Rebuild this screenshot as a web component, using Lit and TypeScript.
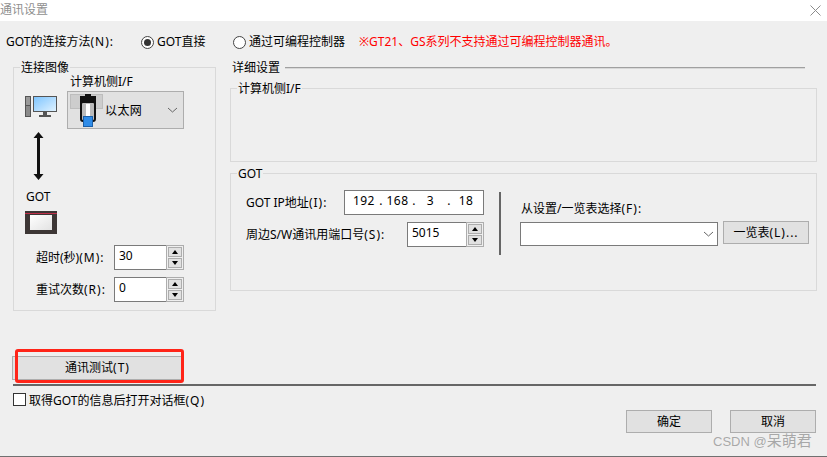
import { LitElement, html, css, svg } from "lit";
import { customElement } from "lit/decorators.js";

const chevron = svg`<svg class="chev" width="11" height="6" viewBox="0 0 11 6"><path d="M1 1l4.5 4L10 1" fill="none" stroke="#666" stroke-width="1"/></svg>`;

@customElement("app-root")
export class AppRoot extends LitElement {
  static styles = css`
    :host {
      display: flex;
      flex-direction: column;
      position: relative;
      width: 827px;
      height: 457px;
      overflow: hidden;
      background: #efefef;
      color: #000;
      font: 12px/16px "Noto Sans", "Noto Sans CJK SC", sans-serif;
    }
    * { box-sizing: border-box; }
    .k { letter-spacing: 1px; }
    .title {
      height: 21px;
      flex: none;
      background: #fff;
      color: #8f8f8f;
      display: flex;
      align-items: center;
      justify-content: space-between;
      padding: 0 6px 1px 0;
    }
    .top {
      height: 42px;
      flex: none;
      display: flex;
      align-items: center;
      padding-left: 6px;
    }
    .conn { width: 135px; }
    .radio {
      width: 13px;
      height: 13px;
      flex: none;
      border-radius: 50%;
      border: 1px solid #444;
      background: #fff;
      margin-right: 3px;
      display: flex;
      align-items: center;
      justify-content: center;
    }
    .radio.on::after {
      content: "";
      width: 7px;
      height: 7px;
      border-radius: 50%;
      background: #333;
    }
    .opt1 { width: 76px; }
    .opt2 { width: 110px; }
    .warn { color: #ff0000; white-space: nowrap; }
    .main {
      display: flex;
      gap: 14px;
      padding: 4px 10px 0 13px;
      flex: none;
    }
    .group {
      border: 1px solid #d9d9d9;
    }
    .legend {
      width: fit-content;
      height: 16px;
      margin: -8px 0 0 6px;
      padding: 0 1px;
      background: #efefef;
    }
    .left { width: 203px; height: 244px; }
    .link { display: flex; margin-top: -2px; padding-left: 11px; }
    .link-icons { width: 42px; padding-top: 22px; display: flex; flex-direction: column; }
    .link-icons svg { display: block; }
    .arrow { margin: 15px 0 0 8px; }
    .got-label { margin: 9px 0 0 1px; }
    .got-icon { margin-top: 6px; }
    .iface-label { padding-left: 3px; height: 17px; }
    .iface {
      width: 117px;
      height: 38px;
      background: #e1e1e1;
      border: 1px solid #adadad;
      display: flex;
      align-items: center;
      padding: 0 5px 0 2px;
    }
    .iface svg.plug { flex: none; align-self: flex-start; margin-top: 2px; }
    .iface span { margin-left: 1px; padding-top: 2px; flex: 1; font-size: 12px; letter-spacing: 0.4px; }
    .spin-row {
      display: flex;
      align-items: center;
      height: 25px;
      margin-top: 7px;
      padding-left: 22px;
    }
    .spin-row.first { margin-top: 11px; }
    .spin-row label { width: 78px; }
    .spin {
      display: flex;
      height: 25px;
      width: 70px;
      background: #fff;
    }
    .spin.wide { width: 77px; }
    .spin .val {
      flex: 1;
      border: 1px solid #7a7a7a;
      border-right: 0;
      padding: 0 0 3px 4px;
      display: flex;
      align-items: center;
      background: #fff;
    }
    .spin .btns {
      width: 18px;
      flex: none;
      border: 1px solid #adadad;
      background: #efefef;
      display: flex;
      flex-direction: column;
      gap: 1px;
      padding: 1px;
    }
    .spin .btns i {
      flex: 1;
      background: #e1e1e1;
      border: 1px solid #adadad;
      display: flex;
      align-items: center;
      justify-content: center;
    }
    .up { width: 0; height: 0; border: 3.5px solid transparent; border-top: 0; border-bottom: 4px solid #000; }
    .dn { width: 0; height: 0; border: 3.5px solid transparent; border-bottom: 0; border-top: 4px solid #000; }
    .right { width: 587px; display: flex; flex-direction: column; }
    .detail { display: flex; align-items: center; height: 16px; margin-top: -7px; padding-left: 2px; }
    .detail span { width: 53px; }
    .detail i { width: 520px; height: 1px; background: #a0a0a0; box-shadow: 0 1px 0 #d8d8d8; margin-top: -1px; }
    .pc { height: 74px; margin-top: 12px; }
    .got { height: 118px; margin-top: 11px; }
    .got-body { display: flex; margin-top: 8px; padding-left: 15px; }
    .got-fields { width: 238px; display: flex; flex-direction: column; gap: 7px; }
    .frow { display: flex; align-items: center; justify-content: space-between; height: 25px; }
    .ip {
      width: 140px;
      height: 25px;
      background: #fff;
      border: 1px solid #7a7a7a;
      display: grid;
      grid-template-columns: 22px 12px 21px 12px 21px 16px 18px;
      align-items: center;
      justify-items: center;
      padding: 0 0 3px 8px;
      letter-spacing: 0.4px;
    }
    .divider { width: 2px; height: 63px; margin: 2px 0 0 15px; background: #666; }
    .pick { margin: 11px 0 0 19px; }
    .pick-label { padding-left: 1px; }
    .pick-row { display: flex; align-items: flex-start; gap: 5px; margin-top: 5px; }
    .combo {
      width: 198px;
      height: 24px;
      background: #fff;
      border: 1px solid #7a7a7a;
      display: flex;
      align-items: center;
      justify-content: flex-end;
      padding-right: 3px;
    }
    button {
      font: inherit;
      color: #000;
      background: #e1e1e1;
      border: 1px solid #adadad;
      border-radius: 0;
      padding: 0;
      display: block;
    }
    .list { width: 86px; height: 23px; margin-top: -1px; }
    .test-wrap { position: relative; margin: 45px 0 0 12px; width: 172px; flex: none; }
    .test { width: 171px; height: 24px; }
    .mark {
      position: absolute;
      left: 3px;
      top: -7px;
      width: 169px;
      height: 34px;
      border: 3px solid #ff2418;
      border-radius: 3px;
      pointer-events: none;
    }
    .rule { height: 2px; margin: 4px 11px 0 13px; background: #666; flex: none; }
    .check { display: flex; align-items: center; gap: 3px; height: 13px; margin: 7px 0 0 13px; flex: none; }
    .check span + span { padding-top: 2px; }
    .box { width: 13px; height: 13px; background: #fff; border: 1px solid #333; }
    .actions { display: flex; justify-content: flex-end; gap: 18px; padding-right: 11px; margin-top: 4px; flex: none; }
    .actions button { width: 86px; height: 23px; }
    .foot { margin-top: auto; height: 1px; background: #707070; flex: none; }
    .wm {
      position: absolute;
      left: 713px;
      top: 432px;
      font-size: 15px;
      line-height: 18px;
      font-family: "Liberation Sans", "Noto Sans CJK SC", sans-serif;
      color: rgba(120, 120, 120, 0.6);
      white-space: nowrap;
    }
    .wm span { font-size: 13px; }
    .chev { display: block; flex: none; }
  `;

  spin(v: string, wide = false) {
    return html`<div class="spin ${wide ? "wide" : ""}">
      <div class="val">${v}</div>
      <div class="btns"><i><b class="up"></b></i><i><b class="dn"></b></i></div>
    </div>`;
  }

  render() {
    return html`
      <div class="title">
        <span>通讯设置</span>
        <svg width="11" height="11" viewBox="0 0 11 11"><path d="M.5.5l10 10M10.5.5l-10 10" stroke="#8c8c8c" fill="none"/></svg>
      </div>
      <div class="top">
        <span class="conn">GOT的连接方法<span class="k">(N):</span></span>
        <span class="radio on"></span><span class="opt1">GOT直接</span>
        <span class="radio"></span><span class="opt2">通过可编程控制器</span>
        <span class="warn">※GT21、GS系列不支持通过可编程控制器通讯。</span>
      </div>
      <div class="main">
        <div class="group left">
          <div class="legend">连接图像</div>
          <div class="link">
            <div class="link-icons">
              <svg width="32" height="21" viewBox="0 0 32 21">
                <rect x="0" y="0" width="6" height="21" fill="#555"/>
                <rect x="1" y="1" width="4" height="8" fill="#999"/>
                <rect x="1" y="10" width="4" height="10" fill="#8a8a8a"/>
                <defs><linearGradient id="scr" x1="0" y1="0" x2="1" y2="1"><stop offset="0" stop-color="#7cc4ff"/><stop offset="1" stop-color="#e2f3ff"/></linearGradient></defs>
                <rect x="8.5" y="0.5" width="23" height="15" fill="url(#scr)" stroke="#555"/>
                <rect x="18" y="16" width="4" height="3" fill="#555"/>
                <rect x="14" y="19" width="12" height="2" fill="#555"/>
              </svg>
              <svg class="arrow" width="11" height="48" viewBox="0 0 11 48">
                <path d="M5.5 0L10.5 6H7V42H10.5L5.5 48L.5 42H4V6H.5Z" fill="#111"/>
              </svg>
              <div class="got-label">GOT</div>
              <svg class="got-icon" width="32" height="23" viewBox="0 0 32 23">
                <rect width="32" height="23" fill="#3d3635"/>
                <rect x="0" y="2" width="32" height="1" fill="#c0304a"/>
                <defs><linearGradient id="gs" x1="0" y1="0" x2="1" y2="1"><stop offset="0" stop-color="#fff"/><stop offset="1" stop-color="#e2e2e2"/></linearGradient></defs>
                <rect x="5" y="4" width="22" height="15" fill="url(#gs)"/>
              </svg>
            </div>
            <div>
              <div class="iface-label">计算机侧I/F</div>
              <div class="iface">
                <svg class="plug" width="34" height="33" viewBox="0 0 34 33">
                  <rect x="0.5" y="0.5" width="32" height="14" fill="#cdcdcd" stroke="#bdbdbd"/>
                  <rect x="10" y="2" width="16" height="8" fill="#111"/>
                  <rect x="15" y="0" width="6" height="3" fill="#111"/>
                  <rect x="11" y="8" width="14" height="19" rx="2" fill="#bbb" stroke="#111" stroke-width="2"/>
                  <rect x="16" y="10" width="4" height="13" fill="#fff"/>
                  <rect x="13.5" y="22.5" width="9" height="10" fill="#2f8ce8" stroke="#1a5fa8"/>
                </svg>
                <span>以太网</span>
                ${chevron}
              </div>
            </div>
          </div>
          <div class="spin-row first"><label>超时(秒)<span class="k">(M):</span></label>${this.spin("30")}</div>
          <div class="spin-row"><label>重试次数<span class="k">(R):</span></label>${this.spin("0")}</div>
        </div>
        <div class="right">
          <div class="detail"><span>详细设置</span><i></i></div>
          <div class="group pc"><div class="legend">计算机侧I/F</div></div>
          <div class="group got">
            <div class="legend">GOT</div>
            <div class="got-body">
              <div class="got-fields">
                <div class="frow">
                  <label>GOT IP地址<span class="k">(I):</span></label>
                  <div class="ip"><span>192</span><span>.</span><span>168</span><span>.</span><span>3</span><span>.</span><span>18</span></div>
                </div>
                <div class="frow">
                  <label>周边S/W通讯用端口号<span class="k">(S):</span></label>
                  ${this.spin("5015", true)}
                </div>
              </div>
              <div class="divider"></div>
              <div class="pick">
                <div class="pick-label">从设置/一览表选择<span class="k">(F):</span></div>
                <div class="pick-row">
                  <div class="combo">${chevron}</div>
                  <button class="list">一览表<span class="k">(L)...</span></button>
                </div>
              </div>
            </div>
          </div>
        </div>
      </div>
      <div class="test-wrap">
        <button class="test">通讯测试<span class="k">(T)</span></button>
        <div class="mark"></div>
      </div>
      <div class="rule"></div>
      <div class="check"><span class="box"></span><span>取得GOT的信息后打开对话框<span class="k">(Q)</span></span></div>
      <div class="actions"><button>确定</button><button>取消</button></div>
      <div class="foot"></div>
      <div class="wm"><span>CSDN @</span>呆萌君</div>
    `;
  }
}
